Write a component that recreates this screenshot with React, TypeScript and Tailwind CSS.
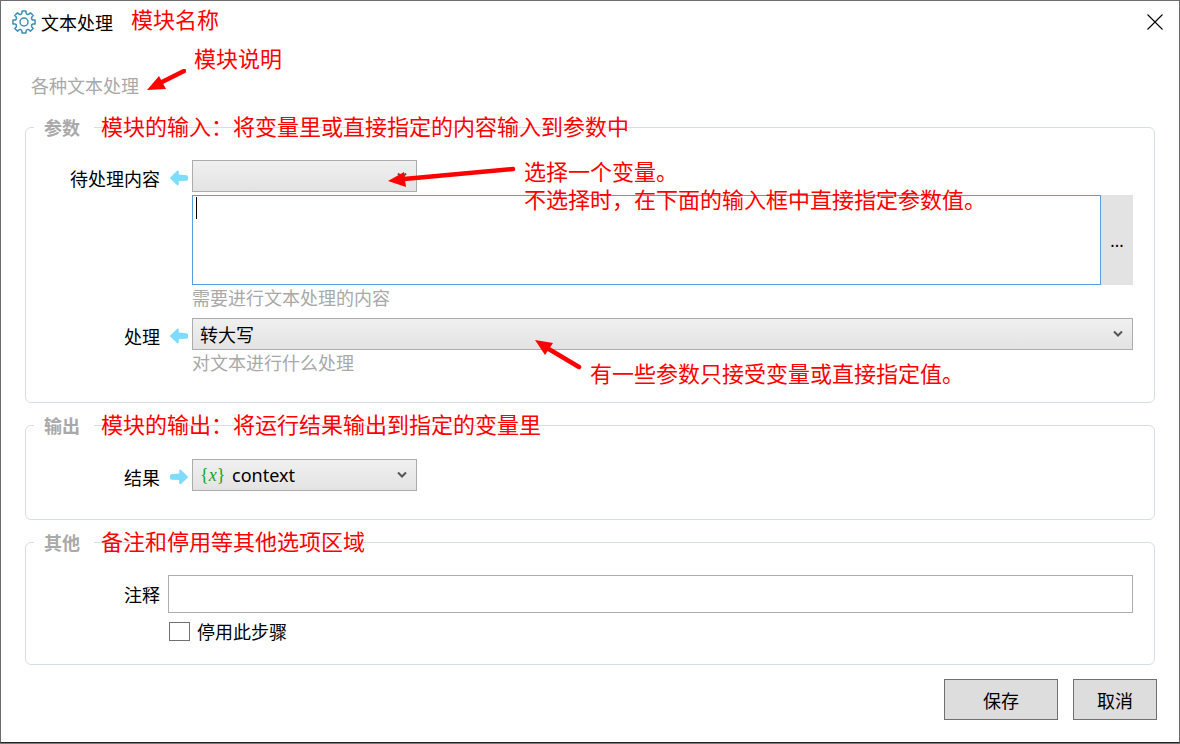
import { useState } from 'react';
import type { ReactNode, SelectHTMLAttributes } from 'react';

const processTypes = ['转大写', '转小写', '去除空白'];

function GearIcon() {
  return (
    <svg viewBox="0 0 24 24" className="w-6 h-6 shrink-0" fill="none" stroke="#3c8fb5" strokeWidth="1.5" strokeLinejoin="round">
      <path d="M10.06.97H13.94L14.07 3.04Q14.83 5.16 16.88 4.2L18.42 2.83 21.17 5.58 19.8 7.12Q18.84 9.17 20.96 9.93L23.03 10.06V13.94L20.96 14.07Q18.84 14.83 19.8 16.88L21.17 18.42 18.42 21.17 16.88 19.8Q14.83 18.84 14.07 20.96L13.94 23.03H10.06L9.93 20.96Q9.17 18.84 7.12 19.8L5.58 21.17 2.83 18.42 4.2 16.88Q5.16 14.83 3.04 14.07L.97 13.94V10.06L3.04 9.93Q5.16 9.17 4.2 7.12L2.83 5.58 5.58 2.83 7.12 4.2Q9.17 5.16 9.93 3.04Z" />
      <circle cx="12" cy="12" r="4" />
    </svg>
  );
}

function FlowArrow({ direction }: { direction: 'in' | 'out' }) {
  return (
    <svg viewBox="2 0 18 16" className={`w-[18px] h-4 ${direction === 'out' ? '-scale-x-100' : ''}`} aria-hidden="true">
      <path
        d="M2.4 7.2 9.2.8Q10.6 0 10.8 1.6V4.6L18.6 5.2Q20 5.4 20 7V9.2Q20 10.6 18.6 10.7L10.8 11V14.2Q10.6 15.8 9.2 15.2L2.4 8.8Q1.6 8 2.4 7.2Z"
        fill="#7fdbff"
      />
    </svg>
  );
}

function Chevron() {
  return (
    <svg viewBox="0 0 10 8" className="absolute right-2.5 top-3 w-2.5 h-2 pointer-events-none" fill="none" stroke="#555" strokeWidth="2">
      <path d="M1 1.5 5 5.5 9 1.5" />
    </svg>
  );
}

function Select({ children, className = '', ...props }: SelectHTMLAttributes<HTMLSelectElement>) {
  return (
    <select
      {...props}
      className={`block w-full h-8 pr-8 appearance-none border border-[#acacac] bg-linear-to-b from-[#f0f0f0] to-[#e3e3e3] text-black outline-none ${className}`}
    >
      {children}
    </select>
  );
}

function Group({ title, note, className, children }: { title: string; note: string; className: string; children: ReactNode }) {
  return (
    <fieldset className={`relative border border-[#d5dfe5] rounded-md pr-[21px] ${className}`}>
      <legend className="ml-2 pl-2.5 pr-3.5 h-6 leading-6 font-bold text-[#a9a9a9]">{title}</legend>
      <Note className="left-[75px] -top-7">{note}</Note>
      {children}
    </fieldset>
  );
}

function Note({ className, children }: { className: string; children: ReactNode }) {
  return (
    <p className={`absolute z-10 text-[22px] leading-7 text-[#ff0000] whitespace-nowrap pointer-events-none ${className}`}>
      {children}
    </p>
  );
}

function FieldLabel({ htmlFor, direction, children }: { htmlFor: string; direction?: 'in' | 'out'; children: ReactNode }) {
  return (
    <div className={`flex items-center shrink-0 ${direction ? 'pt-1' : ''}`}>
      <label htmlFor={htmlFor} className="w-[134px] mr-2 text-right">{children}</label>
      {direction && (
        <span className="pl-0.5 mr-1">
          <FlowArrow direction={direction} />
        </span>
      )}
    </div>
  );
}

export default function App() {
  const [text, setText] = useState('');
  const [disabled, setDisabled] = useState(false);

  return (
    <div className="flex min-h-screen pb-px bg-[#777] font-['Noto_Sans_CJK_SC',sans-serif] text-[18px] leading-6 text-black">
      <main className="flex flex-col flex-1 min-w-0 bg-white border border-[#6d6d6d] border-b-[#222]">
        <header className="flex items-center h-[42px] pl-[11px] pr-4">
          <GearIcon />
          <h1 className="ml-[5px]">文本处理</h1>
          <p className="ml-[18px] pb-2 text-[22px] leading-7 text-[#ff0000]">模块名称</p>
          <button type="button" aria-label="关闭" className="ml-auto">
            <svg viewBox="0 0 16 16" className="w-4 h-4" stroke="#000" strokeWidth="1.1">
              <path d="M.5.5l15 15M15.5.5l-15 15" />
            </svg>
          </button>
        </header>

        <div className="px-6">
          <div className="relative pt-[30px] pb-[18px]">
            <p className="pl-1.5 text-[#a9a9a9]">各种文本处理</p>
            <Note className="left-[169px] top-0">模块说明</Note>
            <svg viewBox="0 0 40 24" className="absolute left-[121px] top-[26px] w-10 h-6" aria-hidden="true">
              <path d="M38 2 14 14" stroke="#ff0000" strokeWidth="4.5" strokeLinecap="round" />
              <path d="M1 21 13 7 20 20Z" fill="#ff0000" />
            </svg>
          </div>

          <Group title="参数" note="模块的输入：将变量里或直接指定的内容输入到参数中" className="pt-[21px] pb-7">
            <div className="flex items-center">
              <FieldLabel htmlFor="source" direction="in">待处理内容</FieldLabel>
              <div className="relative w-[225px]">
                <Select id="source" className="pl-[7px]">
                  <option value=""></option>
                  <option value="context">context</option>
                </Select>
                <Chevron />
                <svg viewBox="0 0 130 24" className="absolute left-[196px] top-1 w-[130px] h-6" aria-hidden="true">
                  <path d="M125 5 16 15" stroke="#ff0000" strokeWidth="4.5" strokeLinecap="round" />
                  <path d="M0 17 16 8 18 23Z" fill="#ff0000" />
                </svg>
                <Note className="left-[332px] -top-1">
                  选择一个变量。
                  <br />
                  不选择时，在下面的输入框中直接指定参数值。
                </Note>
              </div>
            </div>

            <div className="pl-[166px]">
              <div className="relative flex mt-[3px] h-[90px]">
                <textarea
                  aria-label="待处理内容"
                  value={text}
                  onChange={(e) => setText(e.target.value)}
                  className="flex-1 min-w-0 px-1 border border-[#569de5] bg-white resize-none outline-none"
                />
                <span className="absolute left-1 top-0.5 w-px h-[22px] bg-black" aria-hidden="true" />
                <button type="button" aria-label="编辑" className="w-8 bg-[#e3e3e3] text-base">...</button>
              </div>
              <p className="text-[#a9a9a9]">需要进行文本处理的内容</p>
            </div>

            <div className="flex items-center mt-[9px]">
              <FieldLabel htmlFor="process" direction="in">处理</FieldLabel>
              <div className="relative flex-1">
                <Select id="process" className="pl-[7px]">
                  {processTypes.map((type) => (
                    <option key={type}>{type}</option>
                  ))}
                </Select>
                <Chevron />
                <svg viewBox="0 0 48 32" className="absolute left-[342px] top-5 w-12 h-8" aria-hidden="true">
                  <path d="M45 29 13 10" stroke="#ff0000" strokeWidth="4.5" strokeLinecap="round" />
                  <path d="M1 2 19 5 11 17Z" fill="#ff0000" />
                </svg>
                <Note className="left-[398px] top-10">有一些参数只接受变量或直接指定值。</Note>
              </div>
            </div>
            <p className="pl-[166px] text-[#a9a9a9]">对文本进行什么处理</p>
          </Group>

          <Group title="输出" note="模块的输出：将运行结果输出到指定的变量里" className="mt-2.5 pt-[22px] pb-7">
            <div className="flex items-center">
              <FieldLabel htmlFor="result" direction="out">结果</FieldLabel>
              <div className="relative w-[225px]">
                <Select id="result" className="pl-[39px] font-['Noto_Sans',sans-serif]">
                  <option>context</option>
                </Select>
                <span className="absolute left-2 top-1 font-['Liberation_Serif',serif] text-[#0fa526] pointer-events-none" aria-hidden="true">
                  {'{'}
                  <i>x</i>
                  {'}'}
                </span>
                <Chevron />
              </div>
            </div>
          </Group>

          <Group title="其他" note="备注和停用等其他选项区域" className="mt-2.5 pt-[21px] pb-[21px]">
            <div className="flex items-center">
              <FieldLabel htmlFor="comment">注释</FieldLabel>
              <input id="comment" type="text" className="flex-1 min-w-0 h-[38px] px-1 border border-[#abadb3] outline-none" />
            </div>
            <label className="flex items-center w-fit ml-[143px] mt-1.5">
              <input
                type="checkbox"
                checked={disabled}
                onChange={(e) => setDisabled(e.target.checked)}
                className="w-[21px] h-[19px] mr-[7px] appearance-none border border-[#707070] bg-white checked:bg-[#569de5]"
              />
              停用此步骤
            </label>
          </Group>
        </div>

        <footer className="flex justify-end gap-[15px] mt-3.5 pr-[22px] pb-[22px]">
          <button type="button" className="w-[114px] h-[41px] border border-[#707070] bg-[#ddd]">保存</button>
          <button type="button" className="w-[84px] h-[41px] border border-[#707070] bg-[#ddd]">取消</button>
        </footer>
      </main>
    </div>
  );
}
